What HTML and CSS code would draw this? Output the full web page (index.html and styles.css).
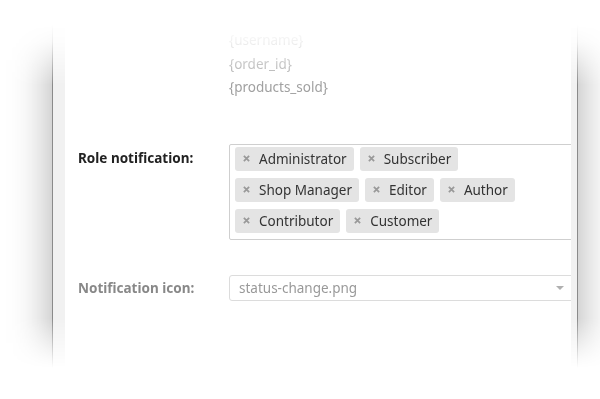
FILE: index.html
```html
<!DOCTYPE html>
<html lang="en">
<head>
  <meta charset="UTF-8">
  <title>Notification settings</title>
  <link rel="stylesheet" href="styles.css">
</head>
<body>
  <div class="stage">
    <div class="window">
      <div class="gutter"></div>
      <div class="content">
        <div class="row placeholders">
          <div class="label"></div>
          <ul class="vars">
            <li>{username}</li>
            <li>{order_id}</li>
            <li>{products_sold}</li>
          </ul>
        </div>

        <div class="row roles">
          <div class="label">Role notification:</div>
          <div class="tagbox">
            <span class="tag"><svg class="x" viewBox="0 0 8 8"><path d="M1 1L7 7M7 1L1 7"/></svg>Administrator</span>
            <span class="tag"><svg class="x" viewBox="0 0 8 8"><path d="M1 1L7 7M7 1L1 7"/></svg>Subscriber</span>
            <span class="tag"><svg class="x" viewBox="0 0 8 8"><path d="M1 1L7 7M7 1L1 7"/></svg>Shop Manager</span>
            <span class="tag"><svg class="x" viewBox="0 0 8 8"><path d="M1 1L7 7M7 1L1 7"/></svg>Editor</span>
            <span class="tag"><svg class="x" viewBox="0 0 8 8"><path d="M1 1L7 7M7 1L1 7"/></svg>Author</span>
            <span class="tag"><svg class="x" viewBox="0 0 8 8"><path d="M1 1L7 7M7 1L1 7"/></svg>Contributor</span>
            <span class="tag"><svg class="x" viewBox="0 0 8 8"><path d="M1 1L7 7M7 1L1 7"/></svg>Customer</span>
          </div>
        </div>

        <div class="row icon">
          <div class="label muted">Notification icon:</div>
          <div class="select">
            <span>status-change.png</span>
            <span class="arrow"></span>
          </div>
        </div>
      </div>
      <div class="gutter right"></div>
    </div>
  </div>
</body>
</html>
```

FILE: styles.css
```css
body {
  margin: 0;
  background: #fff;
  font-family: 'Noto Sans', 'Open Sans', sans-serif;
  color: #333;
  overflow: hidden;
}

.stage {
  height: 399px;
  padding-top: 20px;
  box-sizing: border-box;
  -webkit-mask-image: linear-gradient(to bottom, transparent 0, transparent 24px, rgba(0,0,0,0.15) 42px, #000 85px, #000 318px, transparent 368px);
  mask-image: linear-gradient(to bottom, transparent 0, transparent 24px, rgba(0,0,0,0.15) 42px, #000 85px, #000 318px, transparent 368px);
}

.window {
  display: flex;
  margin-left: 52px;
  width: 526px;
  height: 350px;
  box-sizing: border-box;
  background: #fff;
  border-left: 1px solid #8a8a8a;
  border-right: 1px solid #8a8a8a;
  box-shadow: 0 0 40px rgba(0,0,0,0.33);
  overflow: hidden;
}

.gutter {
  width: 12px;
  flex: none;
  background: #f1f1f1;
}

.gutter.right {
  width: 6px;
}

.content {
  flex: 1;
  min-width: 0;
  padding-left: 13px;
}

.row {
  display: flex;
  align-items: flex-start;
}

.label {
  width: 151px;
  flex: none;
  font-size: 13.5px;
  font-weight: bold;
  color: #222;
}

.label.muted {
  color: #888;
}

.vars {
  list-style: none;
  margin: 9px 0 0 0;
  padding: 0;
  font-size: 13.5px;
  line-height: 23.5px;
  color: #a0a0a0;
}

.roles {
  margin-top: 44px;
}

.roles .label {
  padding-top: 5px;
}

.tagbox {
  flex: 1;
  margin-right: -10px;
  border: 1px solid #cfcfcf;
  border-radius: 2px;
  padding: 2px 0 6px 5px;
  display: flex;
  flex-wrap: wrap;
  gap: 7px 6px;
}

.tag {
  display: inline-flex;
  align-items: center;
  height: 24px;
  padding: 0 7px 0 8px;
  background: #e4e4e4;
  border-radius: 3px;
  font-size: 13.5px;
  color: #333;
}

.tag .x {
  width: 7px;
  height: 7px;
  margin-right: 9px;
  stroke: #999;
  stroke-width: 2;
  fill: none;
}

.icon {
  margin-top: 35px;
  align-items: center;
}

.select {
  flex: 1;
  margin-right: -10px;
  height: 26px;
  box-sizing: border-box;
  border: 1px solid #dcdcdc;
  border-radius: 3px;
  padding: 0 0 0 9px;
  display: flex;
  align-items: center;
  justify-content: space-between;
  font-size: 13.5px;
  color: #999;
}

.arrow {
  width: 0;
  height: 0;
  margin-right: 16px;
  border-left: 4px solid transparent;
  border-right: 4px solid transparent;
  border-top: 4px solid #b0b0b0;
}
```
